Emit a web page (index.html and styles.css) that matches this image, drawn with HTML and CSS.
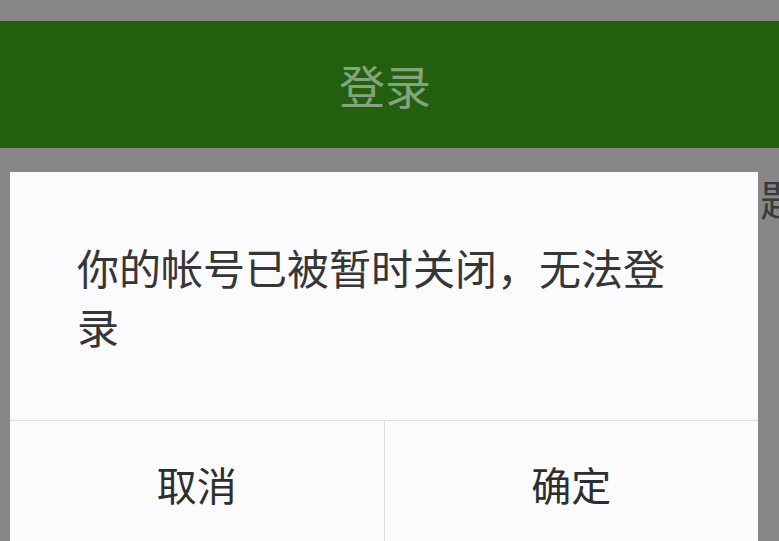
FILE: index.html
```html
<!DOCTYPE html>
<html lang="zh-CN">
<head>
<meta charset="utf-8">
<link rel="stylesheet" href="styles.css">
</head>
<body>
<div class="page">
  <header class="topbar"><span class="title">登录</span></header>
  <div class="behind">题</div>
  <div class="dialog">
    <p class="message">你的帐号已被暂时关闭，无法登录</p>
    <div class="actions">
      <div class="btn">取消</div>
      <div class="btn">确定</div>
    </div>
  </div>
</div>
</body>
</html>
```
FILE: styles.css
```css
html, body {
  margin: 0;
  padding: 0;
  height: 100%;
  overflow: hidden;
}
body {
  background: #878787;
  font-family: "Noto Sans CJK SC", "Noto Sans", sans-serif;
}
.page {
  position: relative;
  width: 779px;
  height: 541px;
  overflow: hidden;
  padding-top: 21px;
  box-sizing: border-box;
}
.topbar {
  height: 127px;
  background: #23600d;
  display: flex;
  align-items: center;
  justify-content: center;
}
.title {
  color: #84a37f;
  font-size: 46px;
  line-height: 1;
  margin-right: 9px;
  margin-top: -2px;
}
.behind {
  padding-left: 760px;
  padding-top: 29px;
  font-size: 42px;
  line-height: 1;
  color: #3a3a3a;
  white-space: nowrap;
}
.dialog {
  position: absolute;
  left: 10px;
  top: 172px;
  width: 748px;
  height: 420px;
  background: #fbfbfd;
}
.message {
  margin: 0;
  padding: 65px 67px 65px 67px;
  font-size: 42px;
  line-height: 59px;
  color: #363636;
}
.actions {
  display: flex;
  border-top: 1px solid #dcdcde;
}
.btn {
  flex: 1;
  height: 126px;
  line-height: 126px;
  text-align: center;
  font-size: 40px;
  color: #2e2e2e;
}
.btn + .btn {
  border-left: 1px solid #dcdcde;
}
```
